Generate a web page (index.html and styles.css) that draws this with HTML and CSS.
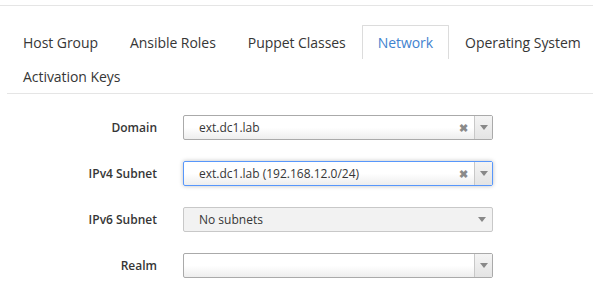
FILE: index.html
```html
<!DOCTYPE html>
<html>
<head>
<meta charset="utf-8">
<link rel="stylesheet" href="styles.css">
</head>
<body>
<div class="page">
  <ul class="tabs">
    <li class="tab">Host Group</li>
    <li class="tab">Ansible Roles</li>
    <li class="tab">Puppet Classes</li>
    <li class="tab active">Network</li>
    <li class="tab">Operating System</li>
    <li class="tab">Activation Keys</li>
  </ul>
  <div class="form">
    <div class="row">
      <label class="label">Domain</label>
      <div class="select">
        <span class="value">ext.dc1.lab</span>
        <span class="clear">&#x2716;</span>
        <span class="arrow"><i class="tri"></i></span>
      </div>
    </div>
    <div class="row">
      <label class="label">IPv4 Subnet</label>
      <div class="select focus">
        <span class="value">ext.dc1.lab (192.168.12.0/24)</span>
        <span class="clear">&#x2716;</span>
        <span class="arrow"><i class="tri"></i></span>
      </div>
    </div>
    <div class="row">
      <label class="label">IPv6 Subnet</label>
      <div class="select disabled">
        <span class="value">No subnets</span>
        <span class="arrow plain"><i class="tri"></i></span>
      </div>
    </div>
    <div class="row">
      <label class="label">Realm</label>
      <div class="select">
        <span class="value"></span>
        <span class="arrow"><i class="tri"></i></span>
      </div>
    </div>
  </div>
</div>
</body>
</html>
```

FILE: styles.css
```css
* { box-sizing: border-box; }
html, body { margin: 0; padding: 0; background: #fff; overflow: hidden; }
body {
  font-family: "Open Sans", "Liberation Sans", sans-serif;
  color: #363636;
}
.page {
  border-top: 1px solid #e5e5e5;
  margin-top: 5px;
  width: 640px;
}
.tabs {
  list-style: none;
  margin: 19px 0 0 7px;
  padding: 0;
  display: flex;
  flex-wrap: wrap;
  border-bottom: 1px solid #e5e5e5;
}
.tab {
  font-size: 14px;
  letter-spacing: -0.05px;
  line-height: 20px;
  padding: 7px 15px;
  border: 1px solid transparent;
  border-bottom: 0;
  color: #363636;
  height: 34px;
}
.tab.active {
  color: #3f82cf;
  border-color: #dcdcdc;
  border-radius: 1px 1px 0 0;
}
.form {
  display: flex;
  flex-direction: column;
  gap: 21px;
  padding-top: 21px;
}
.row {
  display: grid;
  grid-template-columns: 157px 310px;
  column-gap: 26px;
  align-items: center;
}
.label {
  text-align: right;
  font-size: 12px;
  font-weight: 600;
  color: #363636;
}
.select {
  height: 25px;
  border: 1px solid #aaa;
  border-radius: 2px;
  background: linear-gradient(#fff 0%, #fff 50%, #eee 100%);
  display: flex;
  align-items: center;
  font-size: 12px;
  color: #363636;
}
.select.focus {
  border-color: #5897fb;
  box-shadow: 0 0 4px rgba(0, 0, 0, 0.25);
}
.select.disabled {
  background: #f2f2f2;
  border-color: #c8c8c8;
}
.value {
  flex: 1;
  padding-left: 15px;
  white-space: nowrap;
}
.clear {
  width: 22px;
  font-size: 11px;
  font-weight: bold;
  color: #8a8a8a;
  text-align: center;
}
.arrow {
  width: 18px;
  align-self: stretch;
  border-left: 1px solid #c8c8c8;
  background: linear-gradient(#f4f4f4, #e4e4e4);
  display: flex;
  align-items: center;
  justify-content: center;
}
.arrow.plain {
  border-left: 0;
  background: transparent;
  width: 21px;
}
.tri {
  width: 0;
  height: 0;
  border-left: 4px solid transparent;
  border-right: 4px solid transparent;
  border-top: 5px solid #888;
}
```
